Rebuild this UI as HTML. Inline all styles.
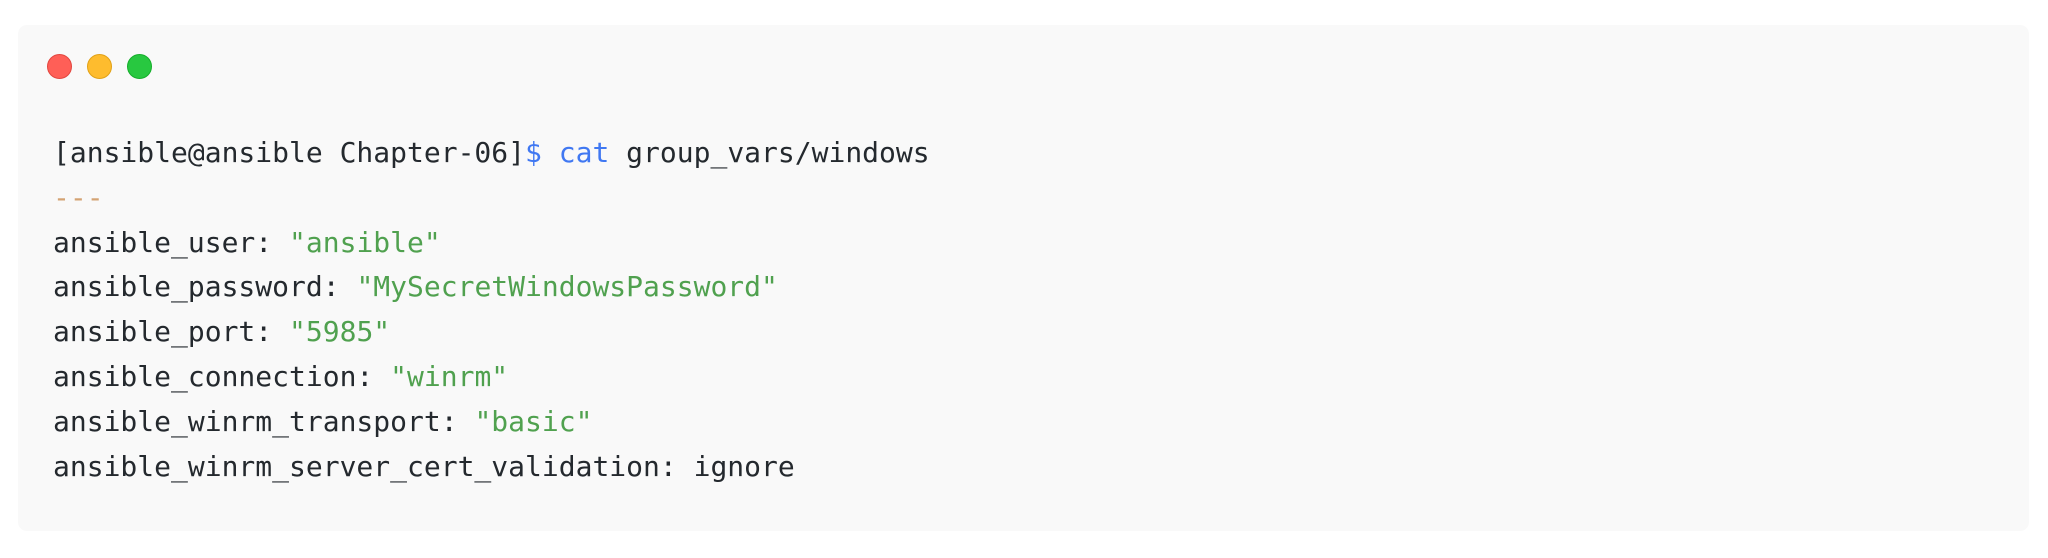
<!DOCTYPE html>
<html><head><meta charset="utf-8"><style>
html,body{margin:0;padding:0;background:#fff;width:2048px;height:558px;overflow:hidden}
.box{position:absolute;left:18px;top:25px;width:2011px;height:506px;background:#f9f9f9;border-radius:9px}
.dot{position:absolute;top:54px;width:25px;height:25px;border-radius:50%;box-sizing:border-box}
pre{position:absolute;left:53px;top:131px;margin:0;font-family:"DejaVu Sans Mono","Liberation Mono",monospace;font-size:28px;line-height:44.8px;color:#24292e}
.b{color:#4078f2}.g{color:#50a14f}.o{color:#d4a373}
</style></head><body>
<div class="box"></div>
<div class="dot" style="left:47px;background:#ff5f57;border:1px solid #e2463f"></div>
<div class="dot" style="left:87px;background:#febc2e;border:1px solid #e1a116"></div>
<div class="dot" style="left:127px;background:#28c840;border:1px solid #14ae2a"></div>
<pre>[ansible@ansible Chapter-06]<span class="b">$ cat</span> group_vars/windows
<span class="o">---</span>
ansible_user: <span class="g">"ansible"</span>
ansible_password: <span class="g">"MySecretWindowsPassword"</span>
ansible_port: <span class="g">"5985"</span>
ansible_connection: <span class="g">"winrm"</span>
ansible_winrm_transport: <span class="g">"basic"</span>
ansible_winrm_server_cert_validation: ignore</pre>
</body></html>
